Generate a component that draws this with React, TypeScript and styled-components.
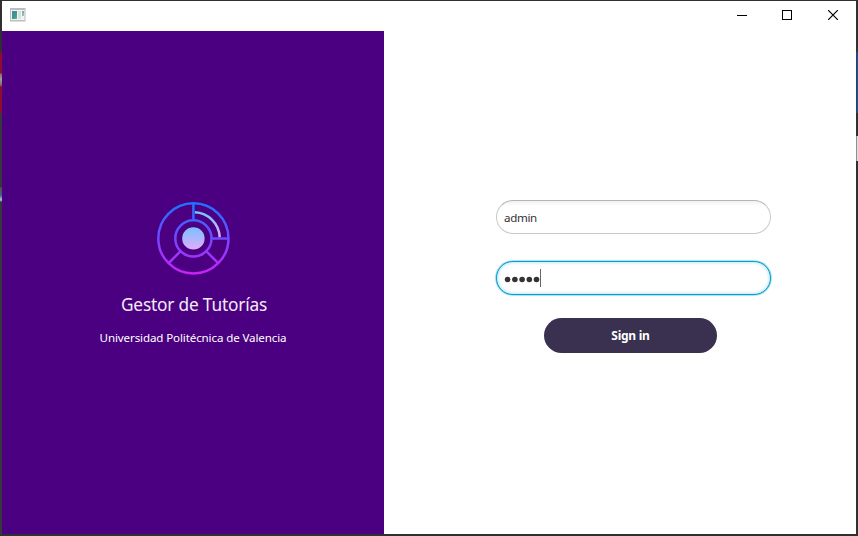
import React from "react";
import styled, { createGlobalStyle, css } from "styled-components";

const GlobalStyle = createGlobalStyle`
  * { box-sizing: border-box; }
  body { margin: 0; overflow: hidden; }
`;

const Desktop = styled.div`
  width: 858px;
  height: 536px;
  display: grid;
  grid-template-columns: 2px 854px 2px;
  grid-template-rows: 1px 533px 2px;
  background: #303032;
  font-family: "Noto Sans", "Open Sans", sans-serif;
`;

const LeftEdge = styled.div`
  grid-area: 2 / 1;
  background: linear-gradient(
    #303032 0 51px, #8e0c2c 51px 72px, #8d6570 73px, #a29a9c 78px, #8d6570 84px,
    #8e0c2c 86px 112px, #38383a 112px 186px, #60504c 187px, #36608c 194px,
    #b5c4d0 199px, #38383a 201px
  );
`;

const RightEdge = styled.div`
  grid-area: 2 / 3;
  background:
    linear-gradient(#303032 0 51px, #24436f 51px 112px, #303032 112px 135px, #909092 135px 160px, #303032 160px) left / 1px 100% no-repeat,
    linear-gradient(#303032 0 51px, #17509a 51px 112px, #303032 112px 135px, #dededf 135px 160px, #303032 160px);
`;

const Window = styled.main`
  grid-area: 2 / 2;
  display: flex;
  flex-direction: column;
  background: #fff;
`;

const TitleBar = styled.header`
  height: 30px;
  display: flex;
  justify-content: space-between;
  padding-left: 8px;
`;

const AppIcon = styled.svg`
  width: 16px;
  height: 14px;
  margin-top: 7px;
`;

const WindowControls = styled.div`
  display: flex;
`;

const ControlButton = styled.button`
  width: 46px;
  height: 28px;
  padding: 0;
  border: 0;
  background: transparent;
  display: flex;
  align-items: center;
  justify-content: center;
`;

const ControlGlyph = styled.svg`
  width: 10px;
  height: 10px;
  fill: none;
  stroke: #000;
`;

const MinimizeGlyph = styled(ControlGlyph)`
  margin-left: 2px;
`;

const Content = styled.div`
  flex: 1;
  display: grid;
  grid-template-columns: 382px 1fr;
`;

const BrandPanel = styled.section`
  background: #4b0082;
  color: #fff;
  display: flex;
  flex-direction: column;
  align-items: center;
  padding-top: 169px;
`;

const Logo = styled.svg`
  width: 76px;
  height: 76px;
  fill: none;
`;

const BrandTitle = styled.h1`
  margin: 16px 0 0 2px;
  font-size: 17.3px;
  font-weight: 400;
  line-height: 26px;
  letter-spacing: -0.19px;
  color: #f3ecf7;
  white-space: nowrap;
`;

const BrandSubtitle = styled.p`
  margin: 11px 0 0 0;
  font-size: 11.6px;
  line-height: 18px;
  letter-spacing: -0.13px;
  white-space: nowrap;
`;

const LoginForm = styled.div`
  display: flex;
  flex-direction: column;
  align-items: flex-start;
  padding: 169px 0 0 112px;
`;

const Field = styled.div<{ $focused?: boolean }>`
  width: 275px;
  height: 34px;
  margin-bottom: 27px;
  display: flex;
  align-items: center;
  padding-left: 7px;
  border: 1px solid #c8c8c8;
  border-top-color: #b5b5b5;
  border-radius: 17px;
  background: linear-gradient(#f1f1f1, #fff 5px);
  color: #333;
  font-size: 11.6px;
  letter-spacing: -0.35px;
  ${(p) =>
    p.$focused &&
    css`
      margin-bottom: 23px;
      background: #fff;
      border-color: #039ed3;
      box-shadow: 0 0 1px 0.6px #039ed399, inset 0 0 3px 1px #039ed340;
    `}
`;

const PasswordDots = styled.svg`
  width: 38px;
  height: 18px;
  fill: #333;
`;

const SignInButton = styled.button`
  width: 173px;
  height: 35px;
  margin-left: 48px;
  padding: 0;
  border: 0;
  border-radius: 17.5px;
  background: #3a3150;
  color: #fff;
  font: bold 12px "Noto Sans", "Open Sans", sans-serif;
  letter-spacing: -0.25px;
`;

export default function App() {
  return (
    <Desktop>
      <GlobalStyle />
      <LeftEdge />
      <Window>
        <TitleBar>
          <AppIcon viewBox="0 0 16 14">
            <defs>
              <linearGradient id="pane" x1="0" y1="0" x2="1" y2="1">
                <stop offset="0" stopColor="#4f7db0" />
                <stop offset="0.6" stopColor="#3f9b80" />
                <stop offset="1" stopColor="#68b08c" />
              </linearGradient>
            </defs>
            <path fill="#b9bfc1" d="M0 0h15.5v13.5H0z" />
            <path fill="#f1f3f4" d="M1 2h13.5v10H1z" />
            <path fill="url(#pane)" d="M2 3h5v8H2z" />
            <path fill="#dcdfe1" d="M8 3h3v8H8z" />
            <path fill="#7fa9cc" d="M12 3h2v2h-2z" />
            <path fill="#8dc5a4" d="M12 5h2v3h-2z" />
          </AppIcon>
          <WindowControls>
            <ControlButton aria-label="Minimize">
              <MinimizeGlyph viewBox="0 0 10 10" shapeRendering="crispEdges">
                <path d="M0 5.5h10" />
              </MinimizeGlyph>
            </ControlButton>
            <ControlButton aria-label="Maximize">
              <ControlGlyph viewBox="0 0 10 10" shapeRendering="crispEdges">
                <path d="M.5 .5h9v9h-9z" />
              </ControlGlyph>
            </ControlButton>
            <ControlButton aria-label="Close">
              <ControlGlyph viewBox="0 0 10 10">
                <path strokeWidth="1.2" d="M0 0l10 10M10 0L0 10" />
              </ControlGlyph>
            </ControlButton>
          </WindowControls>
        </TitleBar>
        <Content>
          <BrandPanel>
            <Logo viewBox="0 0 76 76">
              <defs>
                <linearGradient id="wheel" gradientUnits="userSpaceOnUse" x1="0" y1="2" x2="0" y2="74">
                  <stop offset="0" stopColor="#1976ff" />
                  <stop offset="0.5" stopColor="#7048ff" />
                  <stop offset="1" stopColor="#c822f4" />
                </linearGradient>
                <linearGradient id="core" gradientUnits="userSpaceOnUse" x1="0" y1="10" x2="0" y2="50">
                  <stop offset="0" stopColor="#6dc7ff" />
                  <stop offset="0.45" stopColor="#7cc0ff" />
                  <stop offset="1" stopColor="#e3acfb" />
                </linearGradient>
                <linearGradient id="arc" gradientUnits="userSpaceOnUse" x1="0" y1="11" x2="0" y2="38">
                  <stop offset="0" stopColor="#6dc7ff" />
                  <stop offset="1" stopColor="#e3acfb" />
                </linearGradient>
              </defs>
              <g stroke="url(#wheel)" strokeWidth="2.5">
                <circle cx="38.4" cy="38.4" r="35.1" />
                <circle cx="38.4" cy="38.4" r="18.1" />
                <path d="M38.4 3L38.41 20M56 38.4L73.6 38.41M25.6 51.2L13.6 63.2M51.2 51.2L63.2 63.2" />
              </g>
              <path stroke="url(#arc)" strokeWidth="2.5" d="M39.9 12.3A26 26 0 0 1 64.7 37.1" />
              <circle cx="38.4" cy="38.4" r="11.2" fill="url(#core)" />
            </Logo>
            <BrandTitle>Gestor de Tutorías</BrandTitle>
            <BrandSubtitle>Universidad Politécnica de Valencia</BrandSubtitle>
          </BrandPanel>
          <LoginForm>
            <Field>admin</Field>
            <Field $focused>
              <PasswordDots viewBox="0 0 38 18" aria-label="Password">
                <circle cx="3.6" cy="10.5" r="2.8" />
                <circle cx="10.9" cy="10.5" r="2.8" />
                <circle cx="18.1" cy="10.5" r="2.8" />
                <circle cx="25.3" cy="10.5" r="2.8" />
                <circle cx="32.5" cy="10.5" r="2.8" />
                <path fill="#666" d="M36 0h1v18h-1z" />
              </PasswordDots>
            </Field>
            <SignInButton>Sign in</SignInButton>
          </LoginForm>
        </Content>
      </Window>
      <RightEdge />
    </Desktop>
  );
}
